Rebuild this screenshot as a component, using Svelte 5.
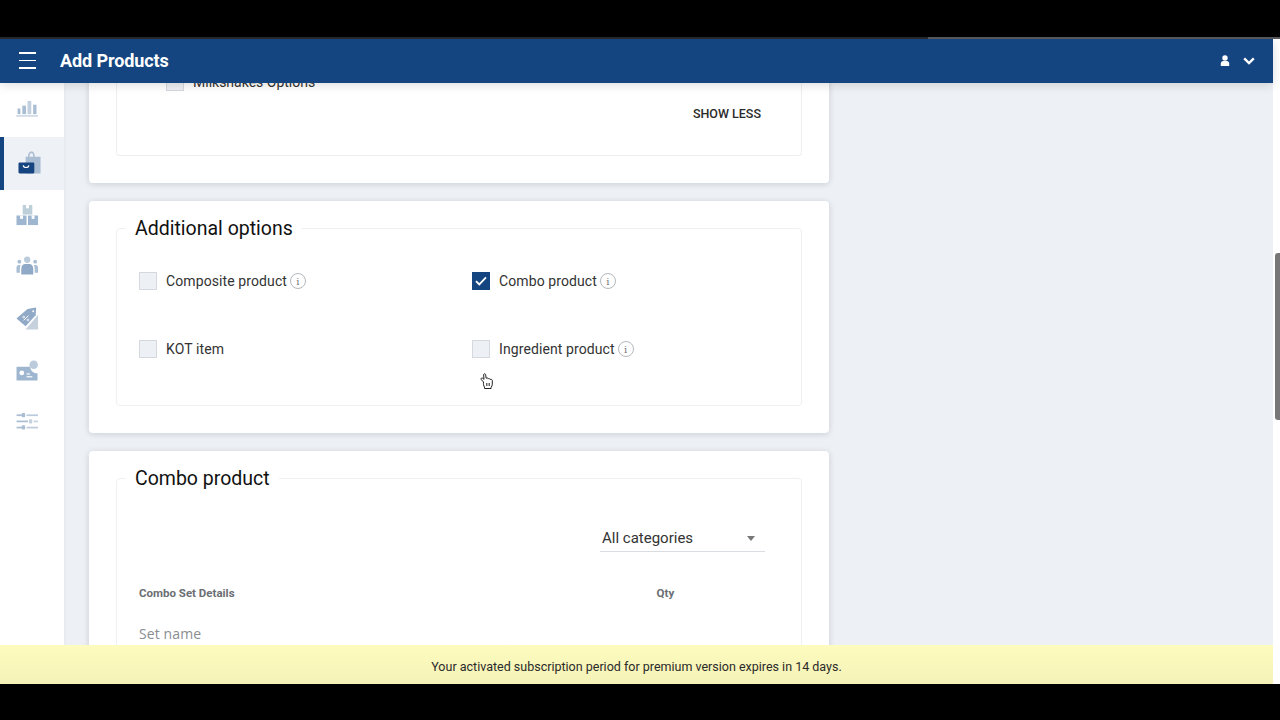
<script>
	const options = [
		{ label: 'Composite product', info: true, checked: false },
		{ label: 'Combo product', info: true, checked: true },
		{ label: 'KOT item', info: false, checked: false },
		{ label: 'Ingredient product', info: true, checked: false }
	]
</script>

<div class="strip"></div>
<div class="app">
	<div class="page">
		<header>
			<button class="burger" aria-label="menu"><i></i><i></i><i></i></button>
			<h1>Add Products</h1>
			<div class="user">
				<svg width="10" height="12" viewBox="0 0 10 12"><circle cx="5" cy="3" r="2.700" fill="#fff" /><path d="M0.800 11V8.400C0.800 6.900 2 6 3.200 6h3.600c1.200 0 2.400.9 2.400 2.400V11z" fill="#fff" /></svg>
				<svg width="12" height="8" viewBox="0 0 12 8"><path d="M1.200 1.400 6 6l4.800-4.600" fill="none" stroke="#fff" stroke-width="2.400" /></svg>
			</div>
		</header>

		<div class="body">
			<nav>
				<div class="nav-item top">
					<svg width="23" height="17" viewBox="0 0 24 18" fill="#a9bdd3"><rect x="1.500" y="9" width="3" height="6" /><rect x="6.500" y="6" width="4" height="9" /><rect x="12" y="1" width="4" height="14" fill="#c3d0de" /><rect x="18" y="5" width="3.500" height="10" /><rect y="16.400" width="23" height="1" /></svg>
				</div>
				<div class="nav-item active">
					<svg width="23" height="23" viewBox="0 0 24 24"><path d="M8 6h2.400C10.800 2 11.800.6 14 .6S17.200 2 17.600 6H23.500V23.500H8z" fill="#a9bdd3" /><path d="M12 6c.2-2.400.8-3.800 2-3.800S15.800 3.600 16 6z" fill="#eef1f5" /><rect x="0.500" y="12" width="16.500" height="11.500" rx="1.200" fill="#154580" /><path d="M5.500 15c.3 3 5.500 3 5.800 0" fill="none" stroke="#fff" stroke-width="1.200" /></svg>
				</div>
				<div class="nav-item">
					<svg width="23" height="23" viewBox="0 0 24 24"><rect x="7" y="1" width="10" height="10" fill="#bdd0da" /><rect x="0.500" y="12" width="10.500" height="10" fill="#9fb6d0" /><rect x="12.500" y="12" width="10.500" height="10" fill="#9fb6d0" /><rect x="10.500" y="1" width="3" height="3.500" fill="#fff" /><rect x="4.300" y="12" width="3" height="3.500" fill="#fff" /><rect x="16.300" y="12" width="3" height="3.500" fill="#fff" /></svg>
				</div>
				<div class="nav-item people">
					<svg width="23" height="20" viewBox="0 0 24 20" fill="#a9bdd3"><circle cx="3.500" cy="5.500" r="2" /><circle cx="20" cy="5.500" r="2" /><circle cx="11.700" cy="3.500" r="3.300" fill="#bccbdc" /><path d="M0.500 17v-5c0-2 1-3 2.500-3H5c-.5 1-1 2-1 3.500V17z" /><path d="M23 17v-5c0-2-1-3-2.500-3h-2c.5 1 1 2 1 3.500V17z" /><path d="M5.500 19v-6c0-3 2-5 4-5h4.500c2 0 4 2 4 5v6z" fill="#8fa9c6" /></svg>
				</div>
				<div class="nav-item">
					<svg width="23" height="23" viewBox="0 0 24 24"><path d="M23 8V23.500H10z" fill="#c5d2dd" /><path d="M0.500 12 12 2l9-1.500-.5 8L10 20z" fill="#8fa9c6" /><circle cx="18" cy="4.500" r="1" fill="#fff" /><path d="M8 14l5-5" stroke="#fff" stroke-width="1" /><circle cx="8" cy="10.500" r="1" fill="none" stroke="#fff" stroke-width=".8" /><circle cx="12.500" cy="13.500" r="1" fill="none" stroke="#fff" stroke-width=".8" /></svg>
				</div>
				<div class="nav-item">
					<svg width="23" height="21" viewBox="0 0 24 22"><path d="M0.500 7H15c0 4 3 7 7.500 7v7.500H0.500z" fill="#9fb6d0" /><circle cx="18.500" cy="5" r="4.500" fill="#bccbdc" /><circle cx="6" cy="13.500" r="2.500" fill="#fff" /><rect x="11" y="14" width="3.500" height="1.200" fill="#fff" /><rect x="11" y="17" width="6" height="1.200" fill="#fff" /></svg>
				</div>
				<div class="nav-item">
					<svg width="23" height="19" viewBox="0 0 24 20" fill="#a9bdd3"><rect x="0.500" y="2.500" width="7" height="1.800" /><rect x="6" y="1" width="3.500" height="4.500" rx=".8" /><rect x="11" y="2.500" width="12" height="1.800" fill="#bccbdc" /><rect x="0.500" y="9" width="12" height="1.800" /><rect x="13.500" y="7.500" width="3.500" height="4.500" rx=".8" fill="#c5d2dd" /><rect x="18.500" y="9" width="4.500" height="1.800" fill="#c5d2dd" /><rect x="0.500" y="15.500" width="6" height="1.800" /><rect x="6" y="14" width="3.500" height="4.500" rx=".8" /><rect x="11" y="15.500" width="12" height="1.800" fill="#bccbdc" /></svg>
				</div>
			</nav>

			<main>
				<section class="card first">
					<div class="box box-top">
						<label class="sub">
							<span class="check"></span>
							Milkshakes Options
						</label>
						<button class="show">SHOW LESS</button>
					</div>
				</section>

				<section class="card">
					<fieldset class="options">
						<legend>Additional options</legend>
						<div class="grid">
							{#each options as opt}
								<div class="opt">
									<span class="check" class:on={opt.checked}>
										{#if opt.checked}
											<svg width="12" height="10" viewBox="0 0 12 10"><path d="M1 5.200 4.300 8.400 11 1.400" fill="none" stroke="#fff" stroke-width="1.800" /></svg>
										{/if}
									</span>
									<span>{opt.label}</span>
									{#if opt.info}
										<span class="info">i</span>
									{/if}
								</div>
							{/each}
						</div>
					</fieldset>
				</section>

				<section class="card">
					<fieldset class="combo">
						<legend>Combo product</legend>
						<div class="select-row">
							<div class="select">
								<span>All categories</span>
								<b></b>
							</div>
						</div>
						<div class="heads">
							<span>Combo Set Details</span>
							<span class="qty">Qty</span>
						</div>
						<div class="set">Set name</div>
					</fieldset>
				</section>
			</main>
		</div>

		<footer>Your activated subscription period for premium version expires in 14 days.</footer>
	</div>

	<div class="track"><div class="thumb"></div></div>

	<svg class="cursor" width="15" height="16" viewBox="0 0 15 16">
		<path d="M3.500 9 1.300 6.600C.4 5.400 1.900 4.400 2.900 5.300L4 6.400 3.600 1.800C3.500.4 5.500.4 5.700 1.800L6.100 5.200 6.900 5c.8-.2 1.400.2 1.500.7.800-.3 1.500 0 1.700.7 .9-.3 2-.1 2.200 1v3.800c0 1.400-.6 2.300-1.200 3.100v1.200H4.500v-1.300C3.700 12.900 3.200 10.600 3.500 9z" fill="#fff" stroke="#222" stroke-width="1" />
		<path d="M6.500 10v3M8 10v3M9.500 10v3" stroke="#555" stroke-width=".9" />
	</svg>
</div>

<style>
	:global(body) {
		background: #000;
		font-family: Roboto, 'Liberation Sans', sans-serif;
	}
	.strip {
		margin-top: 37px;
		height: 2px;
		background: linear-gradient(to right, #26282c 72.500%, #55575a 72.500%);
	}
	.app {
		position: relative;
		display: flex;
		height: 645px;
		overflow: hidden;
		background: #fff;
		color: #222;
	}
	.page {
		flex: 1;
		min-width: 0;
		display: flex;
		flex-direction: column;
	}
	header {
		height: 44px;
		flex: none;
		display: flex;
		align-items: center;
		background: #154580;
		color: #fff;
		box-sizing: border-box;
		padding: 0 18px 1px 19px;
		position: relative;
		z-index: 2;
		box-shadow: 0 2px 10px rgba(0, 0, 0, 0.14);
	}
	.burger {
		width: 17px;
		padding: 0;
		border: none;
		background: none;
		display: flex;
		flex-direction: column;
		gap: 5.500px;
	}
	.burger i {
		height: 1.800px;
		background: #fff;
	}
	h1 {
		margin: 0 0 0 24px;
		font-size: 18px;
		font-weight: 700;
		letter-spacing: -0.1px;
	}
	.user {
		margin-left: auto;
		display: flex;
		align-items: center;
		gap: 13px;
	}
	.body {
		flex: 1;
		min-height: 0;
		display: flex;
		overflow: hidden;
		background: #edf0f4;
	}
	nav {
		width: 64px;
		flex: none;
		background: #fff;
		box-shadow: 1px 0 3px rgba(0, 0, 0, 0.04);
	}
	.nav-item {
		height: 51.500px;
		display: flex;
		align-items: center;
		justify-content: center;
		box-sizing: border-box;
		padding-right: 10px;
	}
	.nav-item.top {
		height: 54px;
		padding-bottom: 4px;
	}
	.nav-item.active {
		height: 53px;
		background: #eef1f5;
		border-left: 4px solid #154580;
		padding-bottom: 3px;
	}
	.nav-item.people {
		padding-bottom: 3px;
	}
	main {
		flex: 1;
		padding: 0 24px 0 25px;
		display: flex;
		flex-direction: column;
		align-items: flex-start;
		gap: 18px;
		margin-top: -20px;
	}
	.card {
		width: 740px;
		box-sizing: border-box;
		background: #fff;
		border-radius: 4px;
		box-shadow: 0 1px 6px rgba(20, 40, 70, 0.16);
		padding: 27px;
		flex: none;
	}
	.card.first {
		padding-top: 0;
	}
	.box-top {
		height: 92px;
		border: 1px solid #eceef1;
		border-top: none;
		border-radius: 0 0 4px 4px;
		position: relative;
	}
	.sub {
		display: flex;
		align-items: center;
		font-size: 14px;
		color: #333;
		padding-left: 49px;
		padding-top: 10px;
	}
	.show {
		position: absolute;
		right: 40px;
		top: 43px;
		border: none;
		background: none;
		padding: 0;
		font: 500 12.500px Roboto, sans-serif;
		color: #2a2a2a;
	}
	fieldset {
		margin: 0;
		padding: 0;
		border: 1px solid #eef0f3;
		border-radius: 4px;
		min-width: 0;
		box-sizing: border-box;
	}
	legend {
		margin-left: 9px;
		padding: 2px 9px 0;
		font-size: 19.500px;
		line-height: 22px;
		color: #111;
	}
	.options {
		height: 190px;
		margin-top: -12px;
	}
	.grid {
		display: grid;
		grid-template-columns: 333px 1fr;
		row-gap: 50px;
		padding: 32px 0 0 22px;
	}
	.opt {
		display: flex;
		align-items: center;
		height: 18px;
		font-size: 14px;
		letter-spacing: 0.1px;
		color: #333;
	}
	.check {
		width: 18px;
		height: 18px;
		box-sizing: border-box;
		background: #edf0f4;
		border: 1px solid #d5d8dd;
		margin-right: 9px;
		flex: none;
		display: flex;
		align-items: center;
		justify-content: center;
	}
	.check.on {
		background: #154580;
		border-color: #154580;
	}
	.info {
		margin-left: 3px;
		width: 16px;
		height: 16px;
		box-sizing: border-box;
		border: 1px solid #b4b9be;
		border-radius: 50%;
		display: flex;
		align-items: center;
		justify-content: center;
		font-size: 10px;
		font-family: 'DejaVu Serif', serif;
		color: #777;
	}
	.combo {
		height: 231px;
		margin-top: -12px;
	}
	.select-row {
		display: flex;
		justify-content: flex-end;
		padding: 38px 36px 0 0;
	}
	.select {
		width: 165px;
		height: 24px;
		box-sizing: border-box;
		display: flex;
		align-items: center;
		justify-content: space-between;
		border-bottom: 1px solid #d9dce0;
		font-size: 15px;
		color: #333;
		padding: 0 10px 3px 2px;
	}
	.select b {
		width: 0;
		height: 0;
		border: 4px solid transparent;
		border-top: 5px solid #777;
		border-bottom: none;
	}
	.heads {
		display: flex;
		padding: 34px 0 0 22px;
		font-size: 11.500px;
		font-weight: 700;
		color: #6b6e73;
	}
	.qty {
		margin-left: 422px;
	}
	.set {
		padding: 24px 0 0 22px;
		font: 14px 'Open Sans', sans-serif;
		letter-spacing: 0.1px;
		color: #8a8d91;
	}
	footer {
		height: 39px;
		flex: none;
		display: flex;
		align-items: center;
		justify-content: center;
		box-sizing: border-box;
		padding-top: 3px;
		background: linear-gradient(#fdfbbd, #f4f2b8);
		font-size: 12.500px;
		color: #2a2a2a;
		position: relative;
		z-index: 2;
	}
	.track {
		width: 7px;
		flex: none;
		background: #fff;
		padding-top: 214px;
		padding-left: 2px;
		box-sizing: border-box;
	}
	.thumb {
		height: 167px;
		background: #777;
		border-radius: 3px 0 0 3px;
	}
	.cursor {
		position: absolute;
		left: 480px;
		top: 334px;
		z-index: 3;
	}
</style>
